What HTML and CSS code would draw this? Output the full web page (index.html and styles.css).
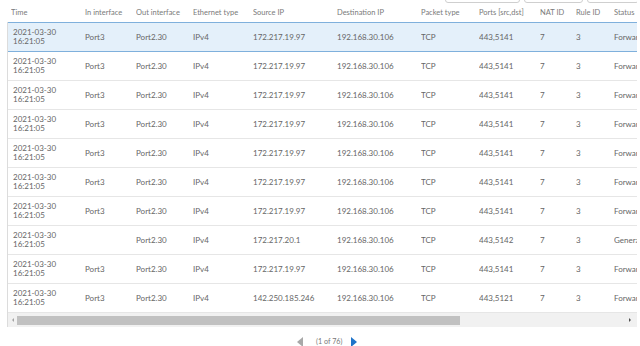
FILE: index.html
```html
<!DOCTYPE html>
<html>
<head>
<meta charset="utf-8">
<link rel="stylesheet" href="styles.css">
</head>
<body>
<div class="page">
  <div class="filters">
    <div class="filter f1"></div>
    <div class="filter f2"></div>
    <div class="filter f3"></div>
  </div>
  <div class="grid-wrap">
    <div class="row head">
      <div class="c first">Time</div><div class="c">In interface</div><div class="c">Out interface</div><div class="c">Ethernet type</div><div class="c">Source IP</div><div class="c">Destination IP</div><div class="c">Packet type</div><div class="c">Ports [src,dst]</div><div class="c">NAT ID</div><div class="c">Rule ID</div><div class="c">Status</div>
    </div>
    <div class="body">
      <div class="row sel"><div class="c dt">2021-03-30<br>16:21:05</div><div class="c">Port3</div><div class="c">Port2.30</div><div class="c">IPv4</div><div class="c">172.217.19.97</div><div class="c">192.168.30.106</div><div class="c">TCP</div><div class="c">443,5141</div><div class="c">7</div><div class="c">3</div><div class="c">Forwarded</div></div>
      <div class="row"><div class="c dt">2021-03-30<br>16:21:05</div><div class="c">Port3</div><div class="c">Port2.30</div><div class="c">IPv4</div><div class="c">172.217.19.97</div><div class="c">192.168.30.106</div><div class="c">TCP</div><div class="c">443,5141</div><div class="c">7</div><div class="c">3</div><div class="c">Forwarded</div></div>
      <div class="row"><div class="c dt">2021-03-30<br>16:21:05</div><div class="c">Port3</div><div class="c">Port2.30</div><div class="c">IPv4</div><div class="c">172.217.19.97</div><div class="c">192.168.30.106</div><div class="c">TCP</div><div class="c">443,5141</div><div class="c">7</div><div class="c">3</div><div class="c">Forwarded</div></div>
      <div class="row"><div class="c dt">2021-03-30<br>16:21:05</div><div class="c">Port3</div><div class="c">Port2.30</div><div class="c">IPv4</div><div class="c">172.217.19.97</div><div class="c">192.168.30.106</div><div class="c">TCP</div><div class="c">443,5141</div><div class="c">7</div><div class="c">3</div><div class="c">Forwarded</div></div>
      <div class="row"><div class="c dt">2021-03-30<br>16:21:05</div><div class="c">Port3</div><div class="c">Port2.30</div><div class="c">IPv4</div><div class="c">172.217.19.97</div><div class="c">192.168.30.106</div><div class="c">TCP</div><div class="c">443,5141</div><div class="c">7</div><div class="c">3</div><div class="c">Forwarded</div></div>
      <div class="row"><div class="c dt">2021-03-30<br>16:21:05</div><div class="c">Port3</div><div class="c">Port2.30</div><div class="c">IPv4</div><div class="c">172.217.19.97</div><div class="c">192.168.30.106</div><div class="c">TCP</div><div class="c">443,5141</div><div class="c">7</div><div class="c">3</div><div class="c">Forwarded</div></div>
      <div class="row"><div class="c dt">2021-03-30<br>16:21:05</div><div class="c">Port3</div><div class="c">Port2.30</div><div class="c">IPv4</div><div class="c">172.217.19.97</div><div class="c">192.168.30.106</div><div class="c">TCP</div><div class="c">443,5141</div><div class="c">7</div><div class="c">3</div><div class="c">Forwarded</div></div>
      <div class="row"><div class="c dt">2021-03-30<br>16:21:05</div><div class="c"></div><div class="c">Port2.30</div><div class="c">IPv4</div><div class="c">172.217.20.1</div><div class="c">192.168.30.106</div><div class="c">TCP</div><div class="c">443,5142</div><div class="c">7</div><div class="c">3</div><div class="c">Generated</div></div>
      <div class="row"><div class="c dt">2021-03-30<br>16:21:05</div><div class="c">Port3</div><div class="c">Port2.30</div><div class="c">IPv4</div><div class="c">172.217.19.97</div><div class="c">192.168.30.106</div><div class="c">TCP</div><div class="c">443,5141</div><div class="c">7</div><div class="c">3</div><div class="c">Forwarded</div></div>
      <div class="row"><div class="c dt">2021-03-30<br>16:21:05</div><div class="c">Port3</div><div class="c">Port2.30</div><div class="c">IPv4</div><div class="c">142.250.185.246</div><div class="c">192.168.30.106</div><div class="c">TCP</div><div class="c">443,5121</div><div class="c">7</div><div class="c">3</div><div class="c">Forwarded</div></div>
    </div>
    <div class="hscroll">
      <div class="arrow left"></div>
      <div class="track"><div class="thumb"></div></div>
      <div class="arrow right"></div>
    </div>
  </div>
  <div class="pager">
    <div class="tri prev"></div>
    <span class="count">(1 of 76)</span>
    <div class="tri next"></div>
  </div>
</div>
</body>
</html>
```
FILE: styles.css
```css
* { box-sizing: border-box; }
html, body { margin: 0; padding: 0; background: #fff; }
body {
  font-family: Lato, "Liberation Sans", sans-serif;
  font-size: 8px;
  color: #666;
  width: 640px;
  height: 346px;
  overflow: hidden;
}
.page { padding-left: 7px; width: 637px; }
.filters {
  height: 3px;
  display: flex;
  align-items: flex-end;
  overflow: hidden;
  padding-left: 438px;
  gap: 4px;
}
.filter {
  flex: none;
  height: 20px;
  border: 1px solid #cfcfcf;
  border-radius: 3px;
  background: #fff;
}
.f1 { width: 75px; }
.f2 { width: 59px; }
.f3 { width: 52px; }
.grid-wrap { width: 630px; overflow: hidden; }
.row {
  display: grid;
  grid-template-columns: 72px 51px 57px 60px 84px 84px 58px 61px 36px 38px 80px;
  padding-left: 6px;
  align-items: center;
  white-space: nowrap;
  width: 700px;
}
.c { overflow: hidden; }
.head {
  height: 19px;
  color: #7a7a7a;
  font-size: 7.5px;
}
.head .first { margin-left: -2px; }
.body { border-left: 1px solid #dcdcdc; border-top: 1px solid #dcdcdc; }
.body .row {
  height: 29px;
  border-bottom: 1px solid #e6e6e6;
  padding-left: 5px;
}
.body .row.sel {
  background: #e4f0fa;
  border-bottom-color: #7fb0dc;
  box-shadow: 0 -1px 0 #7fb0dc;
}
.dt { line-height: 9px; }
.hscroll {
  display: flex;
  align-items: center;
  height: 14px;
  background: #f1f1f1;
  border-left: 1px solid #dcdcdc;
}
.arrow { flex: none; width: 9px; height: 14px; position: relative; }
.arrow.left::after, .arrow.right::after {
  content: "";
  position: absolute;
  top: 5px;
  width: 0; height: 0;
  border-top: 2px solid transparent;
  border-bottom: 2px solid transparent;
}
.arrow.left::after { left: 4px; border-right: 2px solid #a3a3a3; }
.arrow.right { width: 12px; }
.arrow.right::after { left: 4px; border-left: 2px solid #505050; }
.track { flex: 1; height: 14px; display: flex; align-items: center; }
.thumb { width: 443px; height: 9px; background: #c1c1c1; }
.pager {
  display: flex;
  align-items: center;
  justify-content: flex-start;
  height: 27px;
  padding-left: 290px;
  padding-top: 2px;
}
.tri { flex: none; width: 0; height: 0; border-top: 5.5px solid transparent; border-bottom: 5.5px solid transparent; }
.prev { border-right: 6px solid #a8a8a8; margin-right: 13px; }
.next { border-left: 6px solid #1f74c9; margin-left: 9px; }
.count { font-size: 7.2px; color: #777; }
```
